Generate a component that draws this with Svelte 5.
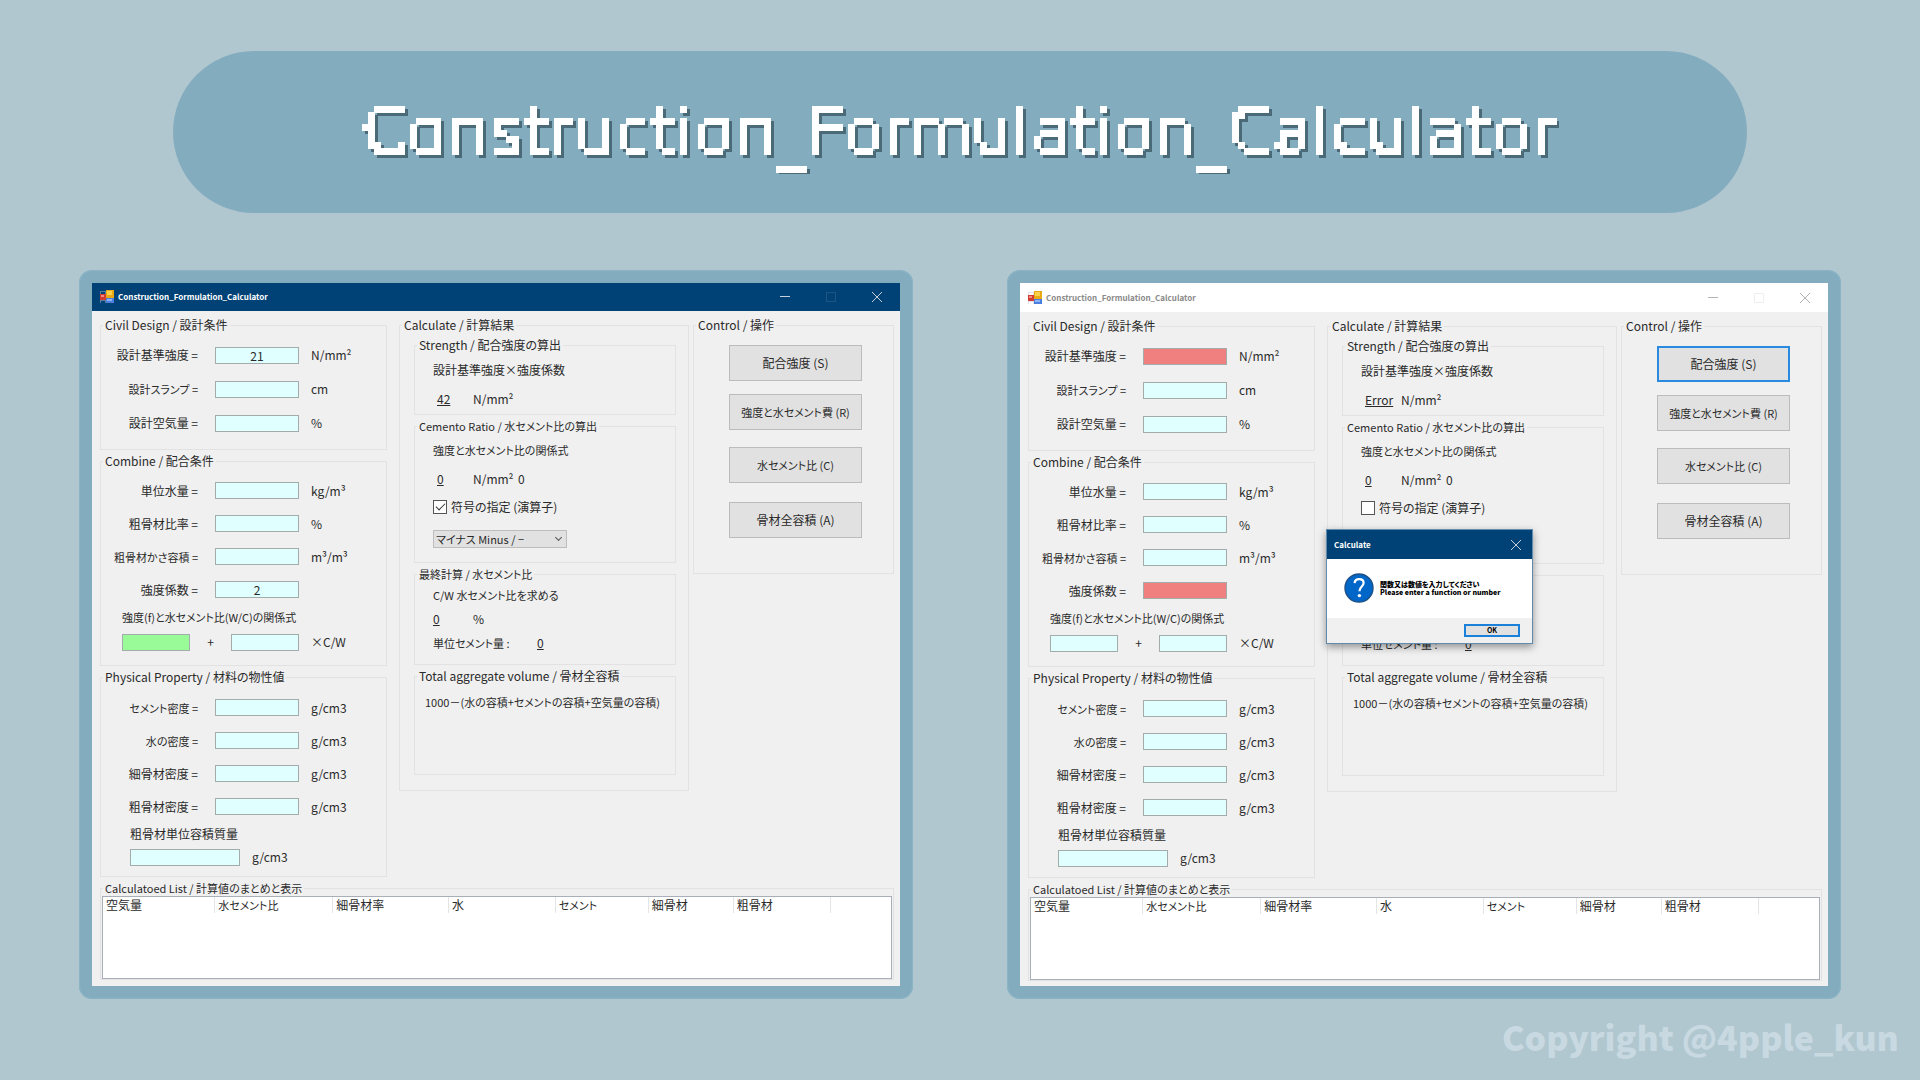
<script>
  const windows = [
    {
      id: 'main',
      active: true,
      strength: '21',
      factor: '2',
      strengthState: '',
      factorState: '',
      constantState: 'ok',
      result: '42',
      signed: true,
      dialog: false,
    },
    {
      id: 'error',
      active: false,
      strength: '',
      factor: '',
      strengthState: 'bad',
      factorState: 'bad',
      constantState: '',
      result: 'Error',
      signed: false,
      dialog: true,
    },
  ];

  const design = (w) => [
    { key: 'base', label: '設計基準強度 =', unit: 'N/mm²', value: w.strength, state: w.strengthState },
    { key: 'slump', label: '設計スランプ =', unit: 'cm', value: '', state: '' },
    { key: 'air', label: '設計空気量 =', unit: '%', value: '', state: '' },
  ];

  const combine = (w) => [
    { key: 'water', label: '単位水量 =', unit: 'kg/m³', value: '', state: '' },
    { key: 'coarse', label: '粗骨材比率 =', unit: '%', value: '', state: '' },
    { key: 'bulk', label: '粗骨材かさ容積 =', unit: 'm³/m³', value: '', state: '' },
    { key: 'factor', label: '強度係数 =', unit: '', value: w.factor, state: w.factorState },
  ];

  const physical = () => [
    { key: 'cement-d', label: 'セメント密度 =', unit: 'g/cm3', value: '', state: '' },
    { key: 'water-d', label: '水の密度 =', unit: 'g/cm3', value: '', state: '' },
    { key: 'fine-d', label: '細骨材密度 =', unit: 'g/cm3', value: '', state: '' },
    { key: 'coarse-d', label: '粗骨材密度 =', unit: 'g/cm3', value: '', state: '' },
  ];

  const actions = ['配合強度 (S)', '強度と水セメント費 (R)', '水セメント比 (C)', '骨材全容積 (A)'];

  const columns = [
    { name: '空気量', share: 112 },
    { name: '水セメント比', share: 118 },
    { name: '細骨材率', share: 116 },
    { name: '水', share: 107 },
    { name: 'セメント', share: 93 },
    { name: '細骨材', share: 85 },
    { name: '粗骨材', share: 97 },
    { name: '', share: 61 },
  ];
  const total = columns.reduce((sum, c) => sum + c.share, 0);

  // Labels that contain kana are set one size smaller than kanji-only labels.
  const hasKana = (text) => /[\u3040-\u30ff]/.test(text);
</script>

{#snippet fields(w, rows)}
  {#each rows as row}
    <div class="field">
      <label for="{w.id}-{row.key}" class:kana={hasKana(row.label)}>{row.label}</label>
      <input id="{w.id}-{row.key}" type="text" class={row.state} value={row.value} />
      <span class="unit">{row.unit}</span>
    </div>
  {/each}
{/snippet}

<svg class="defs" width="0" height="0" aria-hidden="true">
  <filter id="pixels" x="0" y="0" width="100%" height="100%" color-interpolation-filters="sRGB">
    <feFlood x="3" y="1" width="1" height="1" flood-color="#000" />
    <feComposite x="0" y="-2" width="6" height="6" />
    <feTile result="grid" />
    <feComposite in="SourceGraphic" in2="grid" operator="in" />
    <feMorphology operator="dilate" radius="3" />
    <feComponentTransfer result="blocks">
      <feFuncR type="discrete" tableValues="1" />
      <feFuncG type="discrete" tableValues="1" />
      <feFuncB type="discrete" tableValues="1" />
      <feFuncA type="discrete" tableValues="0 1" />
    </feComponentTransfer>
    <feDropShadow dx="3" dy="3" stdDeviation="0" flood-color="#4b6a78" />
  </filter>
</svg>

<main>
  <header class="banner">
    <h1>Construction_Formulation_Calculator</h1>
  </header>

  <div class="showcase">
    {#each windows as w}
      <div class="frame">
        <section class="window" class:inactive={!w.active}>
          <div class="titlebar">
            <svg class="app-icon" viewBox="0 0 14 14" aria-hidden="true">
              <rect x="0" y="1" width="6" height="12" fill={w.active ? '#5d7f9f' : '#dfe4ea'} />
              <rect x="1" y="2" width="4" height="2" fill={w.active ? '#004275' : '#fff'} />
              <rect x="1" y="11" width="4" height="2" fill={w.active ? '#004275' : '#fff'} />
              <rect x="0" y="4" width="6" height="6" fill="#d23c32" />
              <rect x="1" y="5" width="3" height="2" fill="#ee8c80" />
              <rect x="6" y="0" width="8" height="8" fill="#e9a915" />
              <rect x="7" y="1" width="5" height="4" fill="#fbd04c" />
              <rect x="6" y="8" width="8" height="5" fill="#4a7fe0" />
              <rect x="7" y="9" width="5" height="2" fill="#8fb4f5" />
            </svg>
            <h2>Construction_Formulation_Calculator</h2>
            <button class="sys" aria-label="Minimize">
              <svg viewBox="0 0 12 12"><path d="M1 5.5H11" /></svg>
            </button>
            <button class="sys faint" aria-label="Maximize" disabled>
              <svg viewBox="0 0 12 12"><path d="M1.5 1.5H10.5V10.5H1.5Z" /></svg>
            </button>
            <button class="sys" aria-label="Close">
              <svg viewBox="0 0 12 12"><path d="M1 1L11 11M11 1L1 11" /></svg>
            </button>
          </div>

          <div class="form">
            <div class="columns">
              <div class="stack inputs">
                <fieldset>
                  <legend>Civil Design / 設計条件</legend>
                  <div class="body design">{@render fields(w, design(w))}</div>
                </fieldset>

                <fieldset>
                  <legend>Combine / 配合条件</legend>
                  <div class="body combine">
                    {@render fields(w, combine(w))}
                    <p class="caption relation kana">強度(f)と水セメント比(W/C)の関係式</p>
                    <div class="formula">
                      <input type="text" aria-label="定数" class={w.constantState} />
                      <span class="plus">+</span>
                      <input type="text" aria-label="係数" />
                      <span class="unit">×C/W</span>
                    </div>
                  </div>
                </fieldset>

                <fieldset>
                  <legend>Physical Property / 材料の物性値</legend>
                  <div class="body physical">
                    {@render fields(w, physical())}
                    <label class="caption mass" for="{w.id}-mass">粗骨材単位容積質量</label>
                    <div class="mass-row">
                      <input id="{w.id}-mass" type="text" />
                      <span class="unit">g/cm3</span>
                    </div>
                  </div>
                </fieldset>
              </div>

              <fieldset class="results">
                <legend>Calculate / 計算結果</legend>
                <div class="stack nested">
                  <fieldset>
                    <legend>Strength / 配合強度の算出</legend>
                    <div class="body strength">
                      <p>設計基準強度×強度係数</p>
                      <p class="values"><output>{w.result}</output><span>N/mm²</span></p>
                    </div>
                  </fieldset>
                  <fieldset>
                    <legend class="kana">Cemento Ratio / 水セメント比の算出</legend>
                    <div class="body ratio">
                      <p class="kana">強度と水セメント比の関係式</p>
                      <p class="values"><output>0</output><span>N/mm²</span><span>0</span></p>
                      <label class="check">
                        <input type="checkbox" checked={w.signed} />
                        符号の指定 (演算子)
                      </label>
                      <div class="pick">
                        <select class="kana" aria-label="演算子"><option>マイナス Minus / −</option></select>
                      </div>
                    </div>
                  </fieldset>
                  <fieldset>
                    <legend class="kana">最終計算 / 水セメント比</legend>
                    <div class="body final">
                      <p class="kana">C/W 水セメント比を求める</p>
                      <p class="values flush"><output>0</output><span>%</span></p>
                      <p class="amount"><span class="kana">単位セメント量 :</span><output>0</output></p>
                    </div>
                  </fieldset>
                  <fieldset>
                    <legend>Total aggregate volume / 骨材全容積</legend>
                    <div class="body volume">
                      <p class="kana">1000－(水の容積+セメントの容積+空気量の容積)</p>
                    </div>
                  </fieldset>
                </div>
              </fieldset>

              <fieldset class="control">
                <legend>Control / 操作</legend>
                <div class="actions">
                  {#each actions as action, i}
                    <button class:focused={i === 0 && w.dialog} class:kana={hasKana(action)}>{action}</button>
                  {/each}
                </div>
              </fieldset>
            </div>

            <fieldset class="list">
              <legend class="kana">Calculatoed List / 計算値のまとめと表示</legend>
              <div class="sheet">
                <table>
                  <colgroup>
                    {#each columns as c}<col style="width: {(c.share / total) * 100}%" />{/each}
                  </colgroup>
                  <thead>
                    <tr>{#each columns as c}<th scope="col" class:kana={hasKana(c.name)}>{c.name}</th>{/each}</tr>
                  </thead>
                </table>
              </div>
            </fieldset>
          </div>

          {#if w.dialog}
            <div class="dialog" role="dialog" aria-label="Calculate">
              <div class="dialog-title">
                <h3>Calculate</h3>
                <button class="sys" aria-label="Close dialog">
                  <svg viewBox="0 0 12 12"><path d="M1 1L11 11M11 1L1 11" /></svg>
                </button>
              </div>
              <div class="dialog-body">
                <svg class="question" viewBox="0 0 30 30" aria-hidden="true">
                  <circle cx="15" cy="15" r="14" fill="#0067c8" stroke="#1d4f86" stroke-width="1.4" />
                  <path
                    d="M10.6 10.2C10.8 7.6 12.7 6.2 15.2 6.2C17.8 6.2 19.6 7.8 19.6 10.1C19.6 13.3 15.4 13.8 15.4 18.2"
                    fill="none"
                    stroke="#fff"
                    stroke-width="2.2"
                  />
                  <circle cx="15.4" cy="22.6" r="1.7" fill="#fff" />
                </svg>
                <p>関数又は数値を入力してください<br />Please enter a function or number</p>
              </div>
              <div class="dialog-foot"><button>OK</button></div>
            </div>
          {/if}
        </section>
      </div>
    {/each}
  </div>

  <footer>Copyright @4pple_kun</footer>
</main>

<style>
  :global(body) {
    margin: 0;
    background: #b1c7d0;
  }

  .defs {
    position: absolute;
  }

  main {
    box-sizing: border-box;
    min-height: 100vh;
    padding: 51px 79px 0;
    display: flex;
    flex-direction: column;
    font: 12px/16px 'Noto Sans CJK JP', sans-serif;
    font-feature-settings: 'palt';
    color: #2a2a2a;
  }

  h1,
  h2,
  h3,
  p,
  fieldset {
    margin: 0;
  }

  fieldset {
    min-width: 0;
    padding: 0;
    border: 1px solid #e2e2e2;
  }

  legend {
    margin-left: 2px;
    padding: 0 2px;
    line-height: 16px;
    white-space: nowrap;
  }

  button,
  input,
  select {
    box-sizing: border-box;
    margin: 0;
    font: inherit;
    font-feature-settings: inherit;
    color: inherit;
    border-radius: 0;
  }

  .kana {
    font-size: 11px;
  }

  .banner {
    margin: 0 94px;
    height: 162px;
    border-radius: 81px;
    background: #84acbf;
    display: flex;
    align-items: center;
    justify-content: center;
  }

  h1 {
    font: 400 65px/84px 'DejaVu Sans', sans-serif;
    color: #fff;
    filter: url(#pixels);
  }

  .showcase {
    margin-top: 57px;
    display: grid;
    grid-template-columns: 1fr 1fr;
    gap: 94px;
  }

  .frame {
    padding: 13px;
    border-radius: 13px;
    background: #84acbf;
    box-shadow: inset 0 0 1px 1px #8bb5c7;
  }

  .window {
    position: relative;
    height: 100%;
    background: #f0f0f0;
  }

  .titlebar {
    height: 28px;
    padding-left: 8px;
    display: flex;
    align-items: center;
    background: #004275;
    color: #fff;
  }

  .inactive .titlebar {
    height: 29px;
    background: #fff;
    color: #8a8a8a;
  }

  .app-icon {
    width: 14px;
    height: 14px;
  }

  h2 {
    flex: 1;
    margin-left: 4px;
    font-size: 8px;
    font-weight: 700;
    line-height: 16px;
  }

  .sys {
    width: 46px;
    height: 28px;
    padding: 0;
    border: 0;
    background: none;
    display: grid;
    place-items: center;
  }

  .sys svg {
    width: 12px;
    height: 12px;
    fill: none;
    stroke: #c4d2df;
    stroke-width: 1;
  }

  .faint svg {
    stroke: #1f5784;
  }

  .inactive .titlebar .sys svg {
    stroke: #b4b4b4;
  }

  .inactive .titlebar .faint svg {
    stroke: #eee;
  }

  .form {
    padding: 6px 6px 5px 8px;
  }

  .columns {
    display: grid;
    grid-template-columns: 299fr 294fr 201fr;
  }

  .stack {
    display: flex;
    flex-direction: column;
    gap: 3px;
  }

  .inputs {
    margin-right: 12px;
  }

  .results {
    margin-right: 4px;
    align-self: start;
  }

  .control {
    align-self: start;
  }

  .nested {
    padding: 4px 12px 15px 14px;
  }

  .design {
    padding: 5px 0 9px;
  }

  .design .field {
    height: 34px;
  }

  .combine {
    padding: 5px 0 9px;
  }

  .physical {
    padding: 6px 0 7px;
  }

  .field {
    height: 33px;
    display: grid;
    grid-template-columns: 114px 84px 1fr;
    align-items: center;
  }

  .field label {
    padding-right: 17px;
    text-align: right;
  }

  input[type='text'] {
    width: 100%;
    height: 17px;
    padding: 0;
    border: 1px solid #a3abab;
    background: #e0ffff;
    text-align: center;
    line-height: 15px;
  }

  input[type='text'].ok {
    background: #98fb98;
  }

  input[type='text'].bad {
    background: #f08080;
  }

  .unit {
    padding-left: 12px;
  }

  .caption {
    display: block;
    line-height: 22px;
  }

  .relation {
    padding-left: 21px;
  }

  .mass {
    padding-left: 29px;
  }

  .formula {
    height: 28px;
    padding-left: 21px;
    display: grid;
    grid-template-columns: 68px 41px 68px 1fr;
    align-items: center;
  }

  .plus {
    text-align: center;
  }

  .mass-row {
    height: 24px;
    padding-left: 29px;
    display: grid;
    grid-template-columns: 110px 1fr;
    align-items: center;
  }

  .strength,
  .ratio,
  .final {
    padding-left: 18px;
  }

  .strength {
    padding-bottom: 4px;
  }

  .strength p {
    line-height: 34px;
  }

  .strength .values {
    line-height: 23px;
  }

  .ratio {
    padding-bottom: 6px;
  }

  .ratio p {
    line-height: 32px;
  }

  .ratio .values {
    line-height: 26px;
  }

  .values {
    display: grid;
    grid-template-columns: 36px 45px 1fr;
    padding-left: 4px;
  }

  .values.flush {
    grid-template-columns: 40px 1fr;
    padding-left: 0;
  }

  output {
    text-decoration: underline;
  }

  .check {
    height: 30px;
    display: flex;
    align-items: center;
    gap: 4px;
  }

  .check input {
    appearance: none;
    width: 14px;
    height: 14px;
    border: 1px solid #555;
    background: #fff;
    display: grid;
    place-items: center;
  }

  .check input:checked::before {
    content: '';
    width: 9px;
    height: 5px;
    margin-bottom: 3px;
    box-sizing: border-box;
    border: solid #333;
    border-width: 0 0 1px 1px;
    rotate: -45deg;
  }

  .pick {
    position: relative;
    width: 134px;
    height: 34px;
    display: flex;
    align-items: center;
  }

  select {
    appearance: none;
    width: 134px;
    height: 18px;
    padding: 0 2px;
    border: 1px solid #bdbdbd;
    background: #e1e1e1;
    line-height: 16px;
  }

  .pick::after {
    content: '';
    position: absolute;
    right: 6px;
    top: 13px;
    width: 5px;
    height: 5px;
    box-sizing: border-box;
    border: solid #555;
    border-width: 0 1px 1px 0;
    rotate: 45deg;
  }

  .final {
    padding-bottom: 8px;
  }

  .final p {
    line-height: 26px;
  }

  .final .values {
    line-height: 22px;
  }

  .final .amount {
    display: grid;
    grid-template-columns: 104px 1fr;
  }

  .volume {
    padding: 0 0 54px 10px;
    line-height: 36px;
    white-space: nowrap;
  }

  .actions {
    padding: 12px 31px 35px 35px;
    display: grid;
    grid-template-rows: 49px 53px 55px 36px;
  }

  .actions button {
    height: 36px;
    padding: 0 0 1px;
    border: 1px solid #bcbcbc;
    background: #e1e1e1;
    white-space: nowrap;
  }

  .actions .focused {
    border: 2px solid #2a8ae0;
  }

  .list {
    margin-top: 3px;
  }

  .sheet {
    height: 83px;
    margin: 0 1px;
    box-sizing: border-box;
    border: 1px solid #a9afb9;
    background: #fff;
  }

  table {
    width: 100%;
    table-layout: fixed;
    border-collapse: collapse;
  }

  th {
    height: 16px;
    padding: 0 0 0 3px;
    border-right: 1px solid #e5e5e5;
    font-weight: 400;
    line-height: 16px;
    text-align: left;
  }

  th:last-child {
    border-right: 0;
  }

  .dialog {
    position: absolute;
    left: 306px;
    top: 246px;
    width: 207px;
    box-sizing: border-box;
    border: 1px solid #5f8cae;
    background: #fff;
    box-shadow: 0 3px 8px rgb(0 0 0 / 40%);
    color: #000;
  }

  .dialog-title {
    height: 29px;
    padding-left: 7px;
    display: flex;
    align-items: center;
    background: #004275;
    color: #fff;
  }

  h3 {
    flex: 1;
    font-size: 8px;
    font-weight: 700;
    line-height: 16px;
  }

  .dialog-title .sys {
    width: 32px;
  }

  .dialog-body {
    height: 59px;
    padding: 0 0 2px 17px;
    box-sizing: border-box;
    display: flex;
    align-items: center;
    gap: 6px;
  }

  .dialog-body p {
    font-size: 7px;
    font-weight: 900;
    line-height: 8px;
    white-space: nowrap;
  }

  .question {
    width: 30px;
    height: 30px;
  }

  .dialog-foot {
    height: 25px;
    padding-right: 12px;
    display: flex;
    align-items: center;
    justify-content: flex-end;
    background: #f0f0f0;
  }

  .dialog-foot button {
    width: 56px;
    height: 13px;
    padding: 0;
    border: 2px solid #1a80da;
    background: #e1e1e1;
    font-size: 7px;
    font-weight: 700;
    line-height: 9px;
  }

  footer {
    margin-top: auto;
    margin-right: -58px;
    padding-bottom: 17px;
    text-align: right;
    font-size: 34px;
    font-weight: 900;
    line-height: 52px;
    color: #c8d9e1;
  }
</style>
